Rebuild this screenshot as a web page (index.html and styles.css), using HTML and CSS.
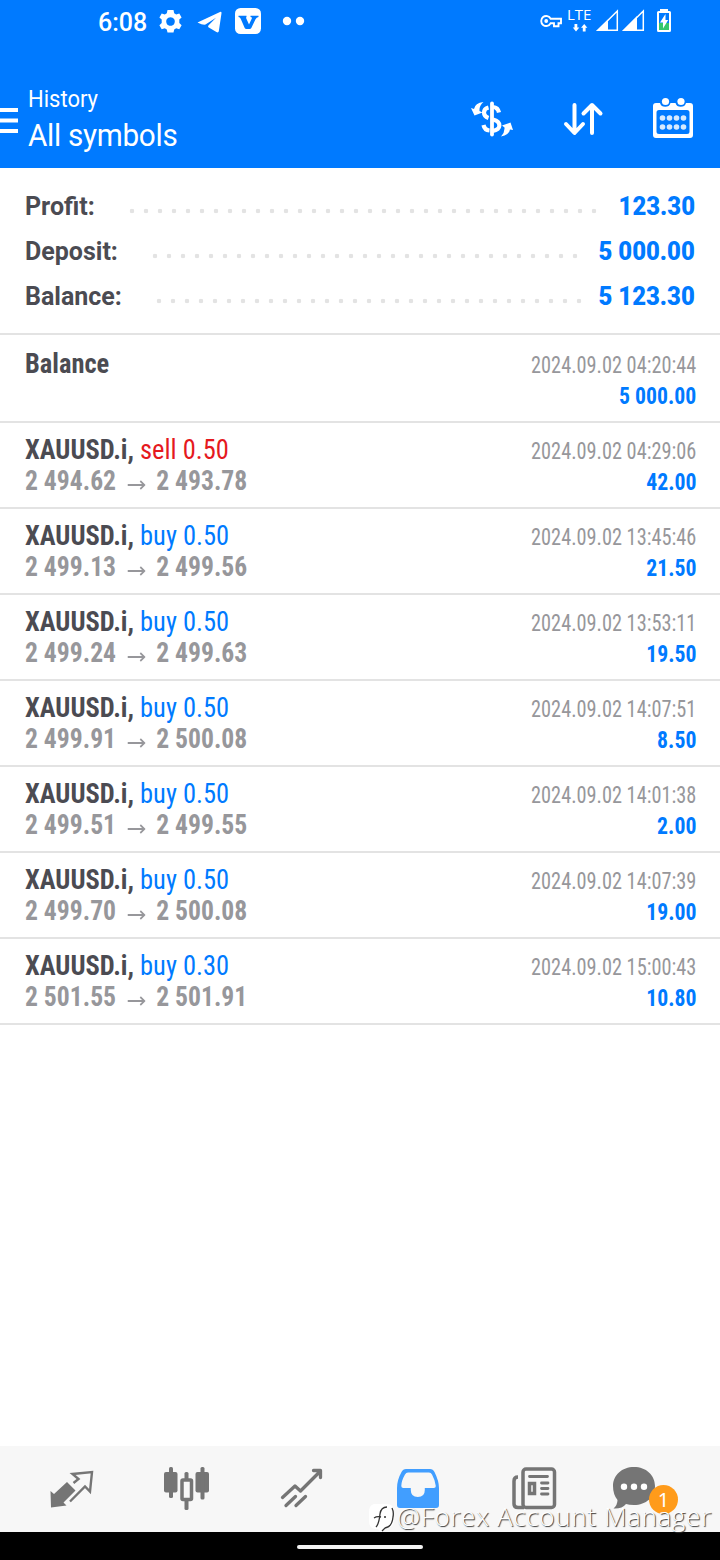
FILE: index.html
```html
<!DOCTYPE html>
<html lang="en">
<head>
<meta charset="utf-8">
<title>History</title>
<link rel="stylesheet" href="styles.css">
</head>
<body>
<div class="app">
  <header class="top">
    <div class="status">
      <span class="clock">6:08</span>
      <svg class="status-left" width="230" height="44" viewBox="90 0 230 44" fill="#fff">
        <path fill-rule="evenodd" d="M167.500 10h6l.7 3.200 2 1.200 3.100-1 2.300 4-2.300 2.200v3.500l2.300 2.200-2.300 4-3.100-1-2 1.200-.7 2.900h-6l-.7-2.900-2-1.200-3.100 1-2.300-4 2.300-2.200v-3.500l-2.300-2.200 2.300-4 3.100 1 2-1.200zM170.500 17.200a4.300 4.300 0 1 0 .01 0z"/>
        <path d="M197.500 22.500 220 11.900Q221.800 11.500 221.500 13.300L218.800 31.300Q218.300 33.200 216.400 32L208.400 27.200Q207.600 26.200 208.600 25.300L216 17.700 205.500 24.600Q203 25.300 197.500 22.500z"/>
        <rect x="235" y="8" width="26" height="26" rx="5.500"/>
        <path fill="#007aff" d="M238.500 15.800h8v1.200q-.6.500-.2 1.500l2.700 6 2.700-5.800q.8-1.500-1.200-1.700v-1.200h8v1.200q-2 .3-3 2.200l-4.200 8.800q-.5 1-1.700 1h-3.200q-1.200 0-1.700-1l-4-9.200q-.7-1.600-2.200-1.800z"/>
        <circle cx="287" cy="21" r="4.200"/><circle cx="300" cy="21" r="4.200"/>
      </svg>
      <div class="network"><span>LTE</span></div>
      <svg class="status-right" width="150" height="44" viewBox="535 0 150 44" fill="none" stroke="#fff">
        <path stroke-width="1.900" d="M550.700 18.800A5 5 0 1 0 550.700 23.200H554V26.300H558.500V23.200H561V18.800z"/>
        <circle cx="546.200" cy="21" r="1.900" fill="#fff" stroke="none"/>
        <path fill="#fff" stroke="none" d="M574.500 24h2.800v3.500h2L576 31.500l-3.200-4h1.700zM582.800 31.500h2.800v-3.700h1.800L584.200 24 581 27.800h1.800z"/>
        <path fill="#fff" stroke="none" d="M596 31 608 19.500V31zM622 31 637 16V31z"/>
        <path stroke-width="1.500" d="M598 30.300H617.300V11zM624 30.300H643.300V11z"/>
        <rect x="660" y="9" width="8" height="2" fill="#fff" stroke="none"/>
        <rect x="658" y="12" width="12" height="19" rx=".5" stroke-width="2"/>
        <path fill="#35c76b" stroke="none" d="M659 23h10v7h-10z"/>
        <path fill="#fff" stroke="none" d="M665.500 14v6h2.700L663 28.500v-6h-3z"/>
      </svg>
    </div>
    <div class="toolbar">
      <svg class="menu" width="18" height="26" viewBox="0 0 18 26"><path fill="#fff" d="M0 0h18v4H0zM0 10.500h18v4H0zM0 21h18v4H0z"/></svg>
      <div class="titles"><div class="title">History</div><div class="subtitle">All symbols</div></div>
      <svg class="actions" width="240" height="60" viewBox="460 90 240 60" fill="none" stroke="#fff">
        <g stroke-width="4.200">
          <path d="M499 112.500Q498 107.500 493 107M488.500 107.500C482.500 109 482.500 116 488.500 118M483.500 125Q484.500 130 489.500 130.500M493 130.800C501.500 130 501.500 121.500 493 119.500"/>
          <path stroke-linecap="round" stroke-width="3.800" d="M492 103.500V134.500"/>
        </g>
        <path fill="#fff" stroke="none" d="M483.500 102Q475 103 474 109L471 108 474.500 115.500 482.500 112.500 479.500 111Q479 106 483.500 102zM501 136.500Q509 135 510 129.500L513 130 510.500 122.500 502 125.500 504.500 127.500Q505 132 501 136.500z"/>
        <path stroke-width="4" stroke-linecap="round" stroke-linejoin="round" d="M574.500 105V132.500M566 124 574.500 133 583 124M592 133V106M583.500 113.500 592 105 600.500 113.500"/>
        <path fill="#fff" fill-rule="evenodd" stroke="none" d="M656 103h4a5.500 5.500 0 0 0 10.500 0h5a5.500 5.500 0 0 0 10.500 0h4q3 0 3 3v29q0 3-3 3h-34q-3 0-3-3v-29q0-3 3-3zM659 110q-2.500 0-2.500 2.500v19q0 2.500 2.500 2.500h28q2.500 0 2.500-2.500v-19q0-2.500-2.500-2.500z"/>
        <g fill="#fff" stroke="none"><circle cx="665.500" cy="101.500" r="3.600"/><circle cx="681" cy="101.500" r="3.600"/></g>
        <g fill="#d6eaff" stroke="none"><circle cx="662.500" cy="118" r="2.800"/><circle cx="669.500" cy="118" r="2.800"/><circle cx="676.500" cy="118" r="2.800"/><circle cx="683.500" cy="118" r="2.800"/><circle cx="662.500" cy="127" r="2.800"/><circle cx="669.500" cy="127" r="2.800"/><circle cx="676.500" cy="127" r="2.800"/><circle cx="683.500" cy="127" r="2.800"/></g>
      </svg>
    </div>
  </header>

  <section class="summary">
    <div class="sum-row"><span>Profit:</span><i class="dots dots-long"></i><b>123.30</b></div>
    <div class="sum-row"><span>Deposit:</span><i class="dots"></i><b>5 000.00</b></div>
    <div class="sum-row"><span>Balance:</span><i class="dots"></i><b>5 123.30</b></div>
  </section>

  <main class="deals">
    <article class="deal first"><div class="line"><span class="symbol">Balance</span><time>2024.09.02 04:20:44</time></div><div class="line"><span class="prices">&nbsp;</span><span class="amount">5 000.00</span></div></article>
    <article class="deal"><div class="line"><span class="symbol">XAUUSD.i, <em class="sell">sell 0.50</em></span><time>2024.09.02 04:29:06</time></div><div class="line"><span class="prices">2 494.62 <svg class="arrow" viewBox="0 0 20 10"><path d="M0 5H18.500M14 1 18.500 5 14 9"/></svg> 2 493.78</span><span class="amount">42.00</span></div></article>
    <article class="deal"><div class="line"><span class="symbol">XAUUSD.i, <em>buy 0.50</em></span><time>2024.09.02 13:45:46</time></div><div class="line"><span class="prices">2 499.13 <svg class="arrow" viewBox="0 0 20 10"><path d="M0 5H18.500M14 1 18.500 5 14 9"/></svg> 2 499.56</span><span class="amount">21.50</span></div></article>
    <article class="deal"><div class="line"><span class="symbol">XAUUSD.i, <em>buy 0.50</em></span><time>2024.09.02 13:53:11</time></div><div class="line"><span class="prices">2 499.24 <svg class="arrow" viewBox="0 0 20 10"><path d="M0 5H18.500M14 1 18.500 5 14 9"/></svg> 2 499.63</span><span class="amount">19.50</span></div></article>
    <article class="deal"><div class="line"><span class="symbol">XAUUSD.i, <em>buy 0.50</em></span><time>2024.09.02 14:07:51</time></div><div class="line"><span class="prices">2 499.91 <svg class="arrow" viewBox="0 0 20 10"><path d="M0 5H18.500M14 1 18.500 5 14 9"/></svg> 2 500.08</span><span class="amount">8.50</span></div></article>
    <article class="deal"><div class="line"><span class="symbol">XAUUSD.i, <em>buy 0.50</em></span><time>2024.09.02 14:01:38</time></div><div class="line"><span class="prices">2 499.51 <svg class="arrow" viewBox="0 0 20 10"><path d="M0 5H18.500M14 1 18.500 5 14 9"/></svg> 2 499.55</span><span class="amount">2.00</span></div></article>
    <article class="deal"><div class="line"><span class="symbol">XAUUSD.i, <em>buy 0.50</em></span><time>2024.09.02 14:07:39</time></div><div class="line"><span class="prices">2 499.70 <svg class="arrow" viewBox="0 0 20 10"><path d="M0 5H18.500M14 1 18.500 5 14 9"/></svg> 2 500.08</span><span class="amount">19.00</span></div></article>
    <article class="deal"><div class="line"><span class="symbol">XAUUSD.i, <em>buy 0.30</em></span><time>2024.09.02 15:00:43</time></div><div class="line"><span class="prices">2 501.55 <svg class="arrow" viewBox="0 0 20 10"><path d="M0 5H18.500M14 1 18.500 5 14 9"/></svg> 2 501.91</span><span class="amount">10.80</span></div></article>
  </main>

  <nav class="tabs">
    <svg width="720" height="86" viewBox="0 1446 720 86" fill="none" stroke="#757575">
      <path fill="#757575" stroke="none" d="M67 1482 75.500 1490.500 63.500 1502.500 66.500 1505.500 51 1507.500 50.500 1491 54 1494z"/>
      <path stroke-width="2.400" d="M73.500 1483 78.500 1479 72.500 1474 92 1472 90 1491.500 85 1486.500 70 1501.500"/>
      <g fill="#757575" stroke="none"><rect x="164" y="1472" width="13.500" height="20.500" rx="2"/><rect x="169" y="1467" width="4" height="31" rx="1.500"/><rect x="195.500" y="1472" width="13.500" height="20.500" rx="2"/><rect x="200.500" y="1467" width="4" height="32.500" rx="1.500"/><rect x="184.500" y="1472" width="4" height="9" rx="1.500"/><rect x="184.500" y="1499" width="4" height="11" rx="1.500"/></g>
      <rect x="182" y="1480" width="9.500" height="19.500" stroke-width="3.500" rx="1"/>
      <path stroke-width="3.300" stroke-linecap="round" stroke-linejoin="round" d="M282.500 1497.500 295 1486 300.500 1491 320.500 1471M313.500 1470.500H320.500V1477.500M286 1505.500 295.500 1496.500M296 1505.500 305.500 1496.500"/>
      <path fill="#419eff" fill-rule="evenodd" stroke="none" d="M406 1469h24q3 0 4.500 3 4.500 9 4.500 16v17q0 3-3 3h-36q-3 0-3-3v-17q0-8 4.500-16 1.500-3 4.500-3zM408 1472.500q-2 0-3 2-3.700 6.500-3.700 11.500 0 2 2 2h7.500v2q0 7 7 7t7-7v-2h9q2 0 2-2-.7-6-3.800-11.500-1-2-3-2z"/>
      <g stroke-width="3.500"><rect x="523" y="1469" width="31.500" height="38.500" rx="3"/><path d="M518 1477Q514 1477 514 1481V1504Q514 1507.500 518 1507.500H524"/><rect x="529.500" y="1483.500" width="5" height="10"/></g>
      <path stroke-width="2.800" stroke-linecap="round" d="M529.500 1476.500H547.500M541.500 1483H548M541.500 1488.500H548M541.500 1494H548"/>
      <path fill="#757575" stroke="none" d="M634 1467c12 0 21 8 21 19s-9 19-21 19q-5 0-8-1-4 5-12.500 4.500 4-3.500 4-8.500-4.500-5.500-4.500-14c0-11 9-19 21-19z"/>
      <g fill="#fff" stroke="none"><circle cx="624" cy="1486.700" r="3.200"/><circle cx="634" cy="1486.700" r="3.200"/><circle cx="644" cy="1486.700" r="3.200"/></g>
    </svg>
    <span class="badge">1</span>
  </nav>
  <footer class="gesture"><i></i></footer>
  <div class="watermark">
    <svg width="30" height="32" viewBox="0 0 30 32"><path fill="#fff" d="M7 2h13q7 0 7 8v8q0 8-8 8l-5 4-3-3H8q-6-1-6-8v-9q0-7 5-8z"/><path fill="none" stroke="#333" stroke-width="1.300" d="M20 5q-6 0-7 7-1 10-4 13M7 16q3-2 7-1M17 15h2M25 6q2 4 1 9-1 10-8 11l-3 3"/></svg>
    <span>@Forex Account Manager</span>
  </div>
</div>
</body>
</html>
```
FILE: styles.css
```css
* { box-sizing: border-box; }
body { margin: 0; background: #fff; font-family: Roboto, "Liberation Sans", sans-serif; }
.app { position: relative; width: 720px; height: 1560px; display: flex; flex-direction: column; overflow: hidden; }

.top { height: 168px; background: #007aff; color: #fff; }
.status { display: flex; height: 44px; align-items: center; position: relative; }
.clock { width: 50px; margin-left: 98px; font-size: 25px; font-weight: 500; line-height: 46px; white-space: nowrap; padding-top: 1px; }
.status-left { position: absolute; left: 90px; top: 0; }
.status-right { position: absolute; left: 535px; top: 0; }
.network { margin-left: 419px; height: 44px; padding-top: 5px; font: 15px/18px "Open Sans", sans-serif; }
.toolbar { display: flex; height: 124px; padding-top: 40px; }
.menu { margin-top: 24px; }
.titles { width: 200px; margin-left: 10px; padding-top: 1px; white-space: nowrap; font-weight: 400; }
.title, .subtitle { transform: scaleX(.957); transform-origin: left; }
.title { font-size: 23px; line-height: 30px; }
.subtitle { font-size: 31px; line-height: 42px; letter-spacing: -.3px; }
.actions { margin: 6px 0 0 232px; }

.summary { height: 167px; padding: 16px 25px 0; border-bottom: 2px solid #e3e3e3; }
.sum-row { display: flex; height: 45px; font-size: 25px; line-height: 45px; font-weight: 700; color: #4b4b52; }
.sum-row b { margin-left: auto; color: #007aff; transform: scaleX(.955); transform-origin: right; }
.dots { width: 434px; height: 14px; margin: 20px 0 0 30px; background: radial-gradient(circle, #e3e3e3 2px, transparent 2.600px) 0 0 / 14px 14px repeat-x; }
.dots-long { width: 476px; }

.deals { flex: 1; }
.deal { height: 86px; padding: 11px 24px 0 25px; border-bottom: 2px solid #e3e3e3; font-family: "Roboto Condensed", Roboto, sans-serif; font-stretch: 75%; }
.deal.first { height: 88px; padding-top: 13px; }
.line { display: flex; justify-content: space-between; align-items: baseline; height: 31px; line-height: 31px; white-space: nowrap; }
.symbol, .prices { font-size: 28px; font-weight: 700; color: #4b4b52; transform: scaleX(.944); transform-origin: left; }
.prices { color: #97979b; transform: scaleX(.915); }
.symbol em { font-style: normal; font-weight: 400; color: #007aff; }
.symbol em.sell { color: #e5191e; }
.line time { font-size: 24px; color: #97979b; transform: scaleX(.846); transform-origin: right; }
.amount { font-size: 24px; font-weight: 700; color: #007aff; transform: scaleX(.905); transform-origin: right; }
.arrow { width: 20px; height: 10px; margin: 0 5px 0 6px; fill: none; stroke: #97979b; stroke-width: 1.800; }

.tabs { position: relative; height: 86px; background: #f7f7f7; }
.tabs svg { display: block; }
.badge { position: absolute; left: 649px; top: 39px; width: 29px; height: 29px; border-radius: 50%; background: #ff9b1a; color: #fff; font: 20px/30px "Noto Sans", sans-serif; text-align: center; }
.gesture { height: 28px; background: #000; display: flex; justify-content: center; padding-top: 13px; }
.gesture i { width: 126px; height: 4px; border-radius: 2px; background: #f2f2f2; }
.watermark { position: absolute; left: 367px; top: 1502px; display: flex; height: 32px; white-space: nowrap; }
.watermark span { font: 300 26px/29px "Open Sans", sans-serif; letter-spacing: .65px; color: #fff; text-shadow: 1px 1px 1px #333; }
```
